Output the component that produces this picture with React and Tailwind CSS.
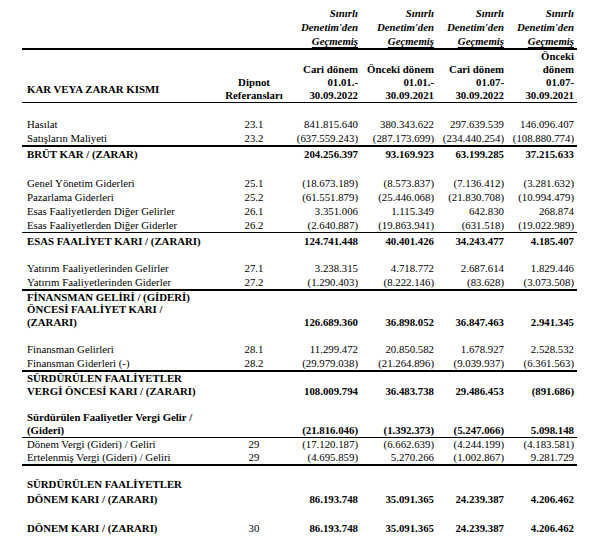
import React from 'react';

const GRID = 'grid grid-cols-[197px_60px_74px_76px_70px_70px] pl-[5px] pr-[3px] items-end';

const Rule = () => <div className="h-[1.5px] bg-black" />;

const Row = ({ label, note, vals = [], bold, className = '' }) => (
  <div className={`${GRID} ${bold ? 'font-bold' : ''} ${className}`}>
    <div>{label}</div>
    <div className="text-center font-normal">{note}</div>
    {vals.map((v, i) => (
      <div key={i} className="text-right whitespace-nowrap">
        {v}
      </div>
    ))}
  </div>
);

const headTop = ['', '', '', ''];

export default function App() {
  return (
    <div className="w-[604px] h-[545px] bg-white text-black [font-family:'Liberation_Serif',serif] text-[10.8px] overflow-hidden">
      <div className="ml-[22px] w-[555px]">
        {/* başlık 1 */}
        <div className={`${GRID} pt-[6px] leading-[14px] font-bold italic`}>
          <div />
          <div />
          {headTop.map((_, i) => (
            <div key={i} className="text-right">
              Sınırlı
              <br />
              Denetim'den
              <br />
              <span className="underline underline-offset-2">Geçmemiş</span>
            </div>
          ))}
        </div>
        <Rule />

        {/* başlık 2 */}
        <div className={`${GRID} leading-[13px] font-bold`}>
          <div className="mb-[6px]">KAR VEYA ZARAR KISMI</div>
          <div className="text-center">
            Dipnot
            <br />
            Referansları
          </div>
          <div className="text-right">
            Cari dönem
            <br />
            01.01.-
            <br />
            30.09.2022
          </div>
          <div className="text-right">
            Önceki dönem
            <br />
            01.01.-
            <br />
            30.09.2021
          </div>
          <div className="text-right">
            Cari dönem
            <br />
            01.07-
            <br />
            30.09.2022
          </div>
          <div className="text-right">
            Önceki
            <br />
            dönem
            <br />
            01.07-
            <br />
            30.09.2021
          </div>
        </div>
        <Rule />

        <div className="leading-[14px]">
          <Row className="mt-[14px]" label="Hasılat" note="23.1" vals={['841.815.640', '380.343.622', '297.639.539', '146.096.407']} />
          <Row label="Satışların Maliyeti" note="23.2" vals={['(637.559.243)', '(287.173.699)', '(234.440.254)', '(108.880.774)']} />
          <Rule />
          <Row bold label="BRÜT KAR / (ZARAR)" vals={['204.256.397', '93.169.923', '63.199.285', '37.215.633']} />

          <Row className="mt-[15px]" label="Genel Yönetim Giderleri" note="25.1" vals={['(18.673.189)', '(8.573.837)', '(7.136.412)', '(3.281.632)']} />
          <Row label="Pazarlama Giderleri" note="25.2" vals={['(61.551.879)', '(25.446.068)', '(21.830.708)', '(10.994.479)']} />
          <Row label="Esas Faaliyetlerden Diğer Gelirler" note="26.1" vals={['3.351.006', '1.115.349', '642.830', '268.874']} />
          <Row label="Esas Faaliyetlerden Diğer Giderler" note="26.2" vals={['(2.640.887)', '(19.863.941)', '(631.518)', '(19.022.989)']} />
          <Rule />
          <Row bold className="mt-px" label="ESAS FAALİYET KARI / (ZARARI)" vals={['124.741.448', '40.401.426', '34.243.477', '4.185.407']} />

          <Row className="mt-[13px]" label="Yatırım Faaliyetlerinden Gelirler" note="27.1" vals={['3.238.315', '4.718.772', '2.687.614', '1.829.446']} />
          <Row label="Yatırım Faaliyetlerinden Giderler" note="27.2" vals={['(1.290.403)', '(8.222.146)', '(83.628)', '(3.073.508)']} />
          <Rule />
          <Row
            bold
            className="leading-[12.5px]"
            label={
              <>
                FİNANSMAN GELİRİ / (GİDERİ)
                <br />
                ÖNCESİ FAALİYET KARI /
                <br />
                (ZARARI)
              </>
            }
            vals={['126.689.360', '36.898.052', '36.847.463', '2.941.345']}
          />

          <Row className="mt-[14px]" label="Finansman Gelirleri" note="28.1" vals={['11.299.472', '20.850.582', '1.678.927', '2.528.532']} />
          <Row label="Finansman Giderleri (-)" note="28.2" vals={['(29.979.038)', '(21.264.896)', '(9.039.937)', '(6.361.563)']} />
          <Rule />
          <Row
            bold
            className="leading-[13px]"
            label={
              <>
                SÜRDÜRÜLEN FAALİYETLER
                <br />
                VERGİ ÖNCESİ KARI / (ZARARI)
              </>
            }
            vals={['108.009.794', '36.483.738', '29.486.453', '(891.686)']}
          />

          <Row
            bold
            className="mt-[13px] leading-[13px]"
            label={
              <>
                Sürdürülen Faaliyetler Vergi Gelir /
                <br />
                (Gideri)
              </>
            }
            vals={['(21.816.046)', '(1.392.373)', '(5.247.066)', '5.098.148']}
          />
          <Rule />
          <Row className="leading-[13px]" label="Dönem Vergi (Gideri) / Geliri" note="29" vals={['(17.120.187)', '(6.662.639)', '(4.244.199)', '(4.183.581)']} />
          <Row className="leading-[13px]" label="Ertelenmiş Vergi (Gideri) / Geliri" note="29" vals={['(4.695.859)', '5.270.266', '(1.002.867)', '9.281.729']} />
          <Rule />

          <Row
            bold
            className="mt-[11px] leading-[15px]"
            label={
              <>
                SÜRDÜRÜLEN FAALİYETLER
                <br />
                DÖNEM KARI / (ZARARI)
              </>
            }
            vals={['86.193.748', '35.091.365', '24.239.387', '4.206.462']}
          />

          <Row bold className="mt-[14px]" label="DÖNEM KARI / (ZARARI)" note="30" vals={['86.193.748', '35.091.365', '24.239.387', '4.206.462']} />
        </div>
      </div>
    </div>
  );
}
